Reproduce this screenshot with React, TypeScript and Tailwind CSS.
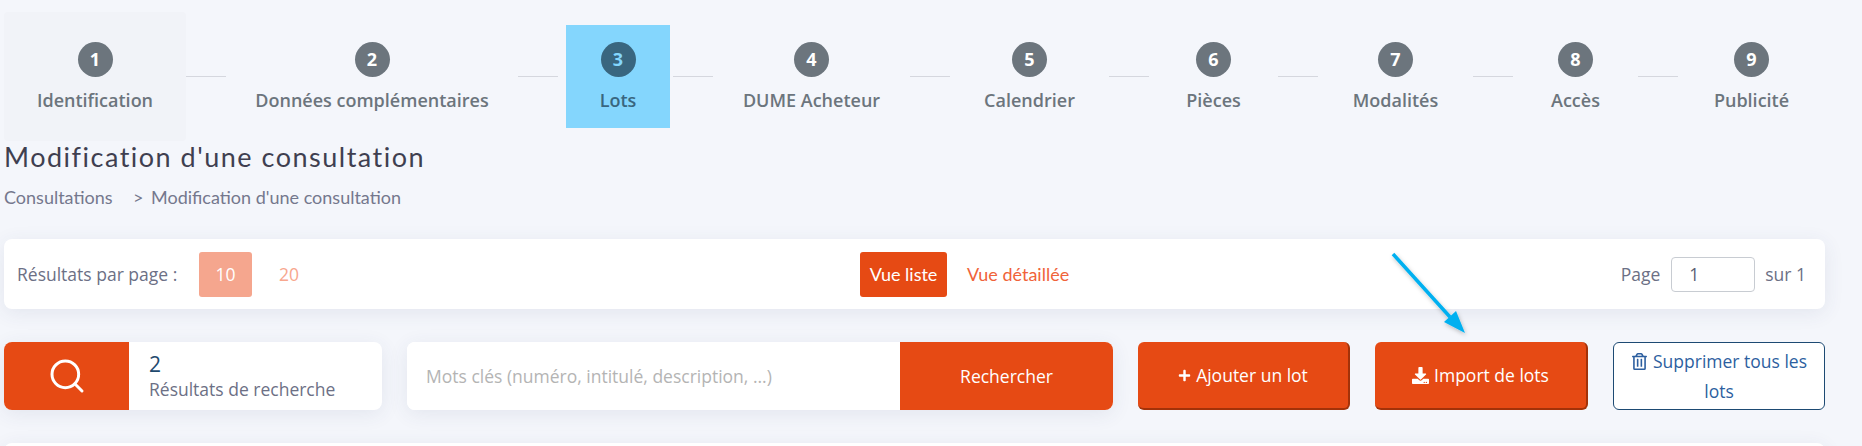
import React from "react";
import { Search } from "lucide-react";
import { FaPlus, FaDownload, FaRegTrashAlt } from "react-icons/fa";

const open = "font-['Open_Sans',sans-serif]";
const soft = "font-['Lato',sans-serif]";

function Step({ n, label, className = "" }: { n: number; label: string; className?: string }) {
  return (
    <div className={`flex flex-col items-center shrink-0 ${className}`}>
      <div className="w-[35px] h-[35px] rounded-full bg-[#6c757d] text-white flex items-center justify-center text-[18px] font-bold">{n}</div>
      <div className="mt-[11px] text-[18px] leading-[25px] font-semibold text-[#6c757d] whitespace-nowrap">{label}</div>
    </div>
  );
}

function Line() {
  return <div className="w-[40px] h-px bg-[#d5d7de] shrink-0 mt-[64px]" />;
}

const cardShadow = "shadow-[0_4px_20px_rgba(60,70,110,0.09)]";

export default function App() {
  return (
    <div className={`relative w-[1862px] h-[446px] overflow-hidden bg-[#f4f6fb] ${open}`}>
      {/* stepper */}
      <div className="flex items-start h-[141px] pt-[12px] pl-[4px]">
        <div className="w-[182px] h-[129px] shrink-0 rounded bg-[#f1f3f8] pt-[30px] flex justify-center">
          <Step n={1} label="Identification" />
        </div>
        <Line />
        <Step n={2} label="Données complémentaires" className="w-[292px] pt-[30px]" />
        <Line />
        <div className="ml-[8px] mr-[3px] mt-[13px] w-[104px] h-[103px] shrink-0 bg-[#84d6fd] pt-[17px] flex flex-col items-center">
          <div className="w-[35px] h-[35px] rounded-full bg-[#39667f] text-[#84d6fd] flex items-center justify-center text-[18px] font-bold">3</div>
          <div className="mt-[11px] text-[18px] leading-[25px] font-semibold text-[#39667f]">Lots</div>
        </div>
        <Line />
        <Step n={4} label="DUME Acheteur" className="w-[197px] pt-[30px]" />
        <Line />
        <Step n={5} label="Calendrier" className="w-[159px] pt-[30px]" />
        <Line />
        <Step n={6} label="Pièces" className="w-[129px] pt-[30px]" />
        <Line />
        <Step n={7} label="Modalités" className="w-[155px] pt-[30px]" />
        <Line />
        <Step n={8} label="Accès" className="w-[125px] pt-[30px]" />
        <Line />
        <Step n={9} label="Publicité" className="w-[147px] pt-[30px]" />
      </div>

      {/* title */}
      <div className="pl-[4px]">
        <h1 className={`${soft} text-[27px] leading-[32px] tracking-[1.5px] text-[#3f3f50] font-normal`}>Modification d'une consultation</h1>
        <div className={`${soft} mt-[12px] flex text-[18px] leading-[24px] text-[#74788d]`}>
          <span className="w-[129px]">Consultations</span>
          <span className="w-[18px]">&gt;</span>
          <span>Modification d'une consultation</span>
        </div>
      </div>

      {/* toolbar */}
      <div className={`mt-[30px] mx-[4px] w-[1821px] h-[70px] bg-white rounded-[8px] ${cardShadow} flex items-center text-[17.5px] text-[#6c7085] relative`}>
        <div className="pl-[13px] w-[195px] whitespace-nowrap">Résultats par page :</div>
        <div className="w-[53px] h-[45px] bg-[#f5a68e] text-white rounded-[3px] flex items-center justify-center">10</div>
        <div className="ml-[27px] text-[#f8a78e]">20</div>
        <div className="flex-1 flex items-center pl-[561px]">
          <div className={`${soft} w-[87px] h-[45px] bg-[#e64a14] text-white text-[18px] rounded-[3px] flex items-center justify-center`}>Vue liste</div>
          <div className={`${soft} ml-[20px] text-[18px] text-[#f0633a]`}>Vue détaillée</div>
        </div>
        <div className="flex items-center pr-[19px]">
          <span>Page</span>
          <div className="ml-[11px] w-[84px] h-[35px] border border-[#c8ccd2] rounded-[4px] flex items-center pl-[17px] text-[#5a5f73]">1</div>
          <span className="ml-[10px]">sur 1</span>
        </div>
      </div>

      {/* search row */}
      <div className="mt-[33px] mx-[4px] w-[1821px] flex items-stretch h-[68px] text-[17.5px]">
        <div className={`w-[378px] bg-white rounded-[8px] overflow-hidden flex ${cardShadow}`}>
          <div className="w-[125px] bg-[#e64a14] flex items-center justify-center text-white">
            <Search size={40} strokeWidth={1.8} />
          </div>
          <div className="pl-[20px] flex flex-col justify-center">
            <div className="text-[21px] leading-[26px] text-[#1f4a6e]">2</div>
            <div className="leading-[24px] text-[#6c7085]">Résultats de recherche</div>
          </div>
        </div>
        <div className={`ml-[25px] w-[706px] bg-white rounded-[8px] overflow-hidden flex ${cardShadow}`}>
          <input
            readOnly
            placeholder="Mots clés (numéro, intitulé, description, ...)"
            className="w-[493px] pl-[19px] outline-none placeholder:text-[#b4b4b4] bg-white"
          />
          <div className="flex-1 bg-[#e64a14] text-white flex items-center justify-center">Rechercher</div>
        </div>
        <div className="ml-[25px] w-[212px] bg-[#e64a14] text-white rounded-[6px] border-r-2 border-b-2 border-[#a33209] flex items-center justify-center gap-[5px]">
          <FaPlus size={13} />
          <span>Ajouter un lot</span>
        </div>
        <div className="ml-[25px] w-[213px] bg-[#e64a14] text-white rounded-[6px] border-r-2 border-b-2 border-[#a33209] flex items-center justify-center gap-[5px]">
          <FaDownload size={17} />
          <span>Import de lots</span>
        </div>
        <div className="ml-[25px] w-[212px] bg-white border border-[#1d4a73] rounded-[6px] leading-[30px] text-[#2d5fa0] text-center flex items-center justify-center px-[10px]">
          <span>
            <FaRegTrashAlt size={17} className="inline-block align-[-2px] mr-[5px] text-[#2d5fa0]" />
            Supprimer tous les lots
          </span>
        </div>
      </div>

      {/* next card */}
      <div className={`mt-[33px] mx-[4px] w-[1821px] h-[40px] bg-white rounded-[8px] ${cardShadow}`} />

      {/* annotation arrow */}
      <svg className="absolute left-[1380px] top-[245px] pointer-events-none" width="100" height="100" viewBox="0 0 100 100">
        <defs>
          <filter id="arrowShadow" x="-20%" y="-20%" width="140%" height="140%">
            <feDropShadow dx="1" dy="2" stdDeviation="2" floodColor="#000" floodOpacity="0.25" />
          </filter>
        </defs>
        <g filter="url(#arrowShadow)">
          <line x1="13" y1="9" x2="70" y2="72" stroke="#00b0f0" strokeWidth="3.5" />
          <polygon points="64,77 76,66 85,88" fill="#00b0f0" />
        </g>
      </svg>
    </div>
  );
}
